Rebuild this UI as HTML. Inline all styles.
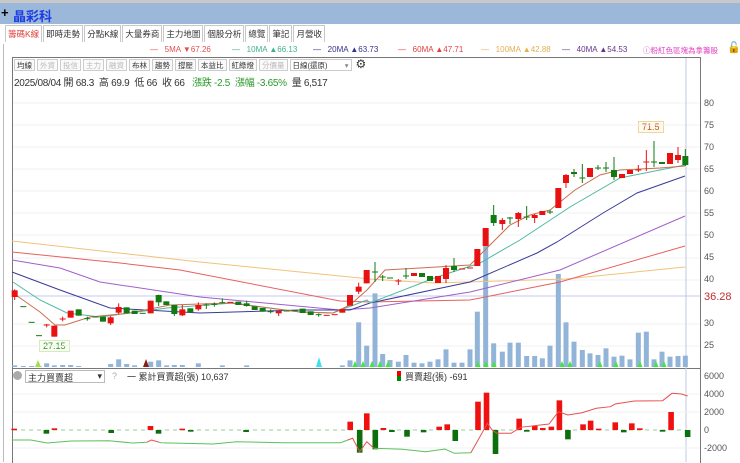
<!DOCTYPE html>
<html><head><meta charset="utf-8"><style>
*{margin:0;padding:0;box-sizing:border-box}
body{width:740px;height:462px;overflow:hidden;background:#fff;font-family:"Liberation Sans","Noto Sans CJK TC",sans-serif;position:relative}
.topline{position:absolute;left:0;top:0;width:740px;height:3px;background:#c8c8c8}
.hdr{position:absolute;left:0;top:3px;width:740px;height:21px;background:#9bb8db}
.hdr .plus{position:absolute;left:1px;top:2px;font-size:13px;font-weight:bold;color:#000}
.hdr .t{position:absolute;left:13px;top:3px;font-size:13px;color:#1c3ce6;font-weight:bold}
.tabs{position:absolute;left:5px;top:25px;height:18px;display:flex}
.tab{border:1px solid #c8c8c8;border-bottom:none;font-size:8.5px;padding:2px 2px 0;height:17px;color:#333;margin-right:1px;background:#fff}
.tab.on{color:#e2403a}
.leftline{position:absolute;left:3px;top:44px;width:1px;height:418px;background:#bbb}
.ma{position:absolute;top:45px;font-size:8px;white-space:nowrap}
.frame{position:absolute;left:12px;top:57px;width:689px;height:406px;border:1px solid #777;border-bottom:none}
.tb{position:absolute;left:14px;top:59px;display:flex;font-size:7.5px;white-space:nowrap}
.tb span{border:1px solid #ccc;padding:0 2px;height:12px;line-height:11px;margin-right:2px;color:#333;background:#fafafa}
.tb span.d{color:#bbb}
.info{position:absolute;left:14px;top:74px;font-size:10px;color:#333;white-space:nowrap;letter-spacing:-0.3px}
.ax{position:absolute;left:704px;font-size:9px;color:#555}
</style></head><body>
<div class="topline"></div>
<div class="hdr"><span class="plus">+</span><span class="t">晶彩科</span></div>
<div class="tabs"><div class="tab on">籌碼K線</div><div class="tab">即時走勢</div><div class="tab">分點K線</div><div class="tab">大量券商</div><div class="tab">主力地圖</div><div class="tab">個股分析</div><div class="tab">總覽</div><div class="tab">筆記</div><div class="tab">月營收</div></div>
<div class="leftline"></div>
<div class="ma" style="left:150px;color:#e05050">—&nbsp;&nbsp;&nbsp;5MA ▼67.26</div>
<div class="ma" style="left:232px;color:#40b090">—&nbsp;&nbsp;&nbsp;10MA ▲66.13</div>
<div class="ma" style="left:313px;color:#333388">—&nbsp;&nbsp;&nbsp;20MA ▲63.73</div>
<div class="ma" style="left:398px;color:#e04040">—&nbsp;&nbsp;&nbsp;60MA ▲47.71</div>
<div class="ma" style="left:481px;color:#e0b050">—&nbsp;&nbsp;&nbsp;100MA ▲42.88</div>
<div class="ma" style="left:562px;color:#663388">—&nbsp;&nbsp;&nbsp;40MA ▲54.53</div>
<div class="ma" style="left:643px;color:#e040c0;font-size:7.5px;top:45px">ⓘ粉紅色區塊為拿籌股</div>
<div class="ma" style="left:727px;top:41px;font-size:11px">🔓</div>
<div class="frame"></div>
<div class="tb"><span>均線</span><span class="d">外資</span><span class="d">投信</span><span class="d">主力</span><span class="d">融資</span><span>布林</span><span>趨勢</span><span>撐壓</span><span>本益比</span><span>紅綠燈</span><span class="d">分價量</span><span style="width:62px;background:#fff">日線(還原) <span style="border:none;padding:0;float:right;margin:0;background:none;color:#888">▾</span></span><span style="border:none;background:none;font-size:12px;line-height:11px">⚙</span></div>
<div class="info">2025/08/04 開 68.3&nbsp; 高 69.9&nbsp; 低 66&nbsp; 收 66&nbsp;&nbsp; <span style="color:#2a9a2a">漲跌 -2.5&nbsp; 漲幅 -3.65%</span>&nbsp; 量 6,517</div>
<div class="ax" style="top:98px">80</div><div class="ax" style="top:120px">75</div><div class="ax" style="top:142px">70</div><div class="ax" style="top:164px">65</div><div class="ax" style="top:186px">60</div><div class="ax" style="top:208px">55</div><div class="ax" style="top:230px">50</div><div class="ax" style="top:252px">45</div><div class="ax" style="top:274px">40</div><div class="ax" style="top:318px">30</div><div class="ax" style="top:340px">25</div>
<div class="ax" style="top:291px;color:#c03030;font-size:11px">36.28</div>
<div class="ax" style="top:371px">6000</div><div class="ax" style="top:389px">4000</div><div class="ax" style="top:407px">2000</div><div class="ax" style="top:425px">0</div><div class="ax" style="top:443px">-2000</div>
<div style="position:absolute;left:638px;top:121px;border:1px solid #e8d8a0;background:#fffbe8;color:#c05030;font-size:9px;padding:0 3px">71.5</div>
<div style="position:absolute;left:39px;top:340px;border:1px solid #d8e8c0;background:#f8fff0;color:#3a8a3a;font-size:9px;padding:0 3px">27.15</div>
<div style="position:absolute;left:12px;top:368px;width:689px;height:1px;background:#777"></div>
<div style="position:absolute;left:13px;top:371px;width:9px;height:9px;border-radius:50%;background:#aaa"></div>
<div style="position:absolute;left:25px;top:370px;width:80px;height:13px;border:1px solid #bbb;font-size:9px;padding-left:2px;color:#333">主力買賣超<span style="float:right;margin-right:2px">▾</span></div>
<div style="position:absolute;left:112px;top:371px;font-size:9px;color:#aaa">?</div>
<div style="position:absolute;left:127px;top:370px;font-size:9px;color:#333">一 累計買賣超(張) 10,637</div>
<div style="position:absolute;left:397px;top:371px;width:4px;height:10px;background:linear-gradient(#e00 50%,#080 50%)"></div>
<div style="position:absolute;left:405px;top:370px;font-size:9px;color:#333">買賣超(張) -691</div>
<svg id="s" width="740" height="462" style="position:absolute;left:0;top:0"></svg>
<script>
var s=document.getElementById('s'),h='';
function L(x1,y1,x2,y2,c,w,d){h+='<line x1="'+x1+'" y1="'+y1+'" x2="'+x2+'" y2="'+y2+'" stroke="'+c+'" stroke-width="'+(w||1)+'"'+(d?' stroke-dasharray="'+d+'"':'')+'/>';}
function R(x,y,w,hh,c){h+='<rect x="'+x+'" y="'+y+'" width="'+w+'" height="'+hh+'" fill="'+c+'"/>';}
function P(pts,c,w){h+='<polyline fill="none" stroke="'+c+'" stroke-width="'+(w||1)+'" points="'+pts+'"/>';}
[103,125,147,169,191,213,235,258,280,324,346].forEach(function(y){L(13,y,700,y,'#f0f0f0');});
L(13,296,700,296,'#c8c8f0');L(686,58,686,462,'#c0c8e0');
var v4=[[44,826],[70,828],[95,828],[117,828],[140,820],[163,826],[188,825],[212,825],[236,828],[332,822],[356,808],[380,822],[404,826],[452,815],[476,811],[500,826],[523,825],[547,825],[595,820],[667,826],[740,826],[1027,826],[1050,811],[1076,697],[1100,767]];
v4.forEach(function(a){var x=a[0]/3,y=90+a[1]/3;R(x-2.5,y,5,367-y,'#92b4d8');});
var v5=[[15,610],[38,792],[60,810],[85,815],[108,795],[132,818],[156,820],[180,815],[204,808],[228,778],[252,818],[276,818],[300,778],[322,665],[347,455],[371,760],[397,785],[420,758],[445,758],[470,798],[494,798],[517,805],[540,767],[565,552],[588,697],[612,755],[637,780],[660,790],[684,795],[708,775],[732,800],[756,797],[780,808],[805,728],[829,725],[852,808],[876,785],[900,800],[924,798],[946,797]];
v5.forEach(function(a){var x=370+a[0]/3,y=90+a[1]/3;R(x-2.5,y,5,367-y,'#92b4d8');});
[355,363,372,380,388,478,486,494,562,570,600,616,640,656,664].forEach(function(x){h+='<polygon points="'+(x-2.5)+',367 '+(x+2.5)+',367 '+x+',361" fill="#3ee83e"/>';});
h+='<polygon points="316,367 322,367 319,357" fill="#40e0f0"/><polygon points="143,367 149,367 146,359" fill="#8b1a1a"/><polygon points="35,367 41,367 38,360" fill="#a0e040"/>';
P('12,241 200,262 370,279 433,283 566,279 685,267','#f2c27c');
P('12,252 120,263 180,270 340,301 370,302 470,300 560,282 685,246','#e86060');
P('12,260 60,268 100,282 200,297 340,310 370,308 470,292 560,270 685,216','#a060c8');
P('12,272 60,290 110,308 200,313 300,310 350,310 370,303 470,282 537,253 557,242 603,213 637,193 685,176','#3a3a98');
P('13,282 40,300 67,313 100,317 167,308 233,303 300,312 333,313 367,300 370,303 437,277 480,263 520,240 570,207 620,178 685,165','#4fb8a0');
P('13,293 40,312 55,325 65,325 90,317 130,313 170,305 230,303 300,312 333,313 350,305 367,290 385,270 420,268 470,265 490,245 510,225 530,215 550,210 575,190 600,175 620,170 660,168 685,166','#c87050');
function C(ox,sc,arr){arr.forEach(function(a){var x=ox+a[0]/3,t=90+a[1]/3,b=90+a[2]/3,c=a[3]=='r'?'#e81010':'#117a11';var wt=a[4]?90+a[4]/3:t,wb=a[5]?90+a[5]/3:b;L(x,wt,x,wb,c);if(b-t<1.5){L(x-3,t,x+3,t,c);}else R(x-3,t,6,b-t,c);});}
C(0,3,[[44,601,621,'r',598,630],[70,650,650,'g'],[95,697,697,'g'],[117,737,737,'g'],[140,705,705,'r',702,712],[163,707,740,'r'],[188,687,687,'r',680,694],[212,662,683,'r'],[236,658,677,'g'],[262,686,686,'g',680,692],[286,681,681,'g'],[309,680,695,'g'],[332,682,700,'r',678,705],[356,651,668,'r',640,672],[380,652,670,'g'],[404,662,672,'g'],[428,670,670,'g'],[452,632,670,'r'],[476,615,637,'g',614,648],[499,634,645,'g'],[523,645,672,'g',645,678],[547,658,676,'r',645,678],[571,655,667,'g'],[595,645,658,'r',637,662],[619,645,645,'g',640,657],[643,643,643,'g',637,650],[667,638,638,'g',625,640],[691,637,637,'r'],[715,635,645,'g'],[740,640,648,'g',632,650],[764,649,660,'g'],[788,654,665,'g'],[812,665,665,'g',658,670],[836,663,670,'r',662,678],[860,663,663,'g'],[884,662,662,'g'],[908,656,669,'g'],[932,664,675,'g'],[956,674,674,'g',670,680],[980,676,676,'r'],[1004,674,674,'r'],[1027,657,668,'r'],[1050,615,647,'r'],[1076,590,605,'r',578,612],[1100,540,580,'r']]);
function D(arr){arr.forEach(function(a){a[1]=(a[1]-90)*3;a[2]=(a[2]-90)*3;if(a[4]){a[4]=(a[4]-90)*3;a[5]=(a[5]-90)*3;}});C(370,3,arr);}
D([[15,272,272,'g',262,282],[38,277,277,'g',275,281],[60,278,278,'g'],[85,281,281,'r',279,285],[108,276,276,'g',268,279],[132,273,276,'r'],[156,273,277,'g'],[180,276,281,'g'],[204,276,283,'r'],[228,268,279,'r',265,283],[252,266,270,'g',258,272],[276,269,269,'r'],[300,268,268,'r'],[322,249,266,'r'],[347,228,246,'r'],[371,215,223,'g',205,226],[397,220,224,'r',218,230],[420,218,218,'g',217,224],[445,213,219,'r',212,227],[470,217,217,'g',206,220],[494,215,218,'r',214,223],[517,211,215,'r'],[540,212,212,'g',210,214],[565,188,208,'r'],[588,175,183,'r',174,188],[612,172,174,'g',169,177],[637,178,178,'g',164,183],[660,168,177,'r'],[684,168,168,'g',165,170],[708,168,168,'g',162,172],[732,170,177,'g',157,180],[756,174,178,'r'],[780,170,174,'r'],[805,170,170,'r',165,172],[829,162,162,'r',150,171],[852,162,162,'g',141,167],[876,162,164,'g'],[900,153,164,'r'],[924,155,160,'r',147,163],[946,156,165,'g',149,166]]);
L(13,430,685,430,'#9c9','1','4 4');
[394,412,448].forEach(function(y){L(13,y,700,y,'#f0f0f0');});
var b=[[30,266,270,'r'],[98,270,281,'g'],[115,265,270,'r'],[235,270,279,'g'],[318,258,270,'r'],[335,270,281,'g'],[385,266,270,'r'],[403,270,275,'g'],[520,270,276,'g'],[740,245,270,'r'],[760,270,338,'g'],[775,220,270,'r'],[793,270,328,'g'],[810,264,270,'r'],[828,270,276,'g'],[860,270,290,'g'],[895,270,277,'g'],[928,260,270,'r'],[945,253,270,'r'],[962,270,303,'g'],[1010,185,270,'r'],[1028,158,270,'r'],[1047,270,342,'g'],[1097,236,270,'r'],[1113,270,275,'g'],[1130,258,270,'r'],[1147,264,270,'r'],[1165,260,270,'r'],[1182,181,270,'r'],[1200,270,298,'g'],[1232,253,270,'r'],[1248,242,270,'r'],[1265,266,270,'r'],[1300,247,270,'r'],[1318,270,277,'g'],[1335,250,270,'r'],[1352,265,270,'r'],[1400,270,275,'g'],[1418,216,270,'r'],[1453,270,291,'g']];
b.forEach(function(a){var x=a[0]/2.113,t=340+a[1]/3,bb=340+a[2]/3;R(x-2.8,t,5.6,Math.max(bb-t,1.5),a[3]=='r'?'#f01010':'#0c6e0c');});
function Q(arr,c){P(arr.map(function(p){return (p[0]/2.113).toFixed(1)+','+(340+p[1]/3).toFixed(1);}).join(' '),c);}
Q([[25,300],[65,300],[100,309],[150,303],[230,302],[280,309],[310,307]],'#5cc05c');
Q([[310,307],[320,300],[335,306]],'#e85050');
Q([[335,306],[340,308],[450,312],[500,305],[600,308],[720,308],[735,300]],'#5cc05c');
Q([[735,300],[745,295],[760,335],[775,305],[790,325]],'#e85050');
Q([[790,325],[850,328],[900,335],[940,327],[960,340],[995,338]],'#5cc05c');
Q([[995,338],[1030,250],[1040,270],[1050,280],[1080,280],[1100,262],[1160,252],[1180,215],[1200,225],[1230,218],[1260,205],[1290,200],[1300,192],[1340,183],[1400,182],[1420,160],[1440,162],[1453,168]],'#e85050');
s.innerHTML=h;
</script>
</body></html>
